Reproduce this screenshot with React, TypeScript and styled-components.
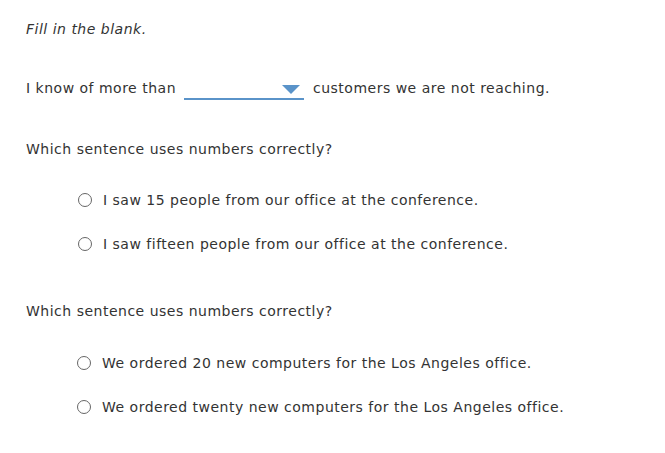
import * as React from "react"
import styled, { createGlobalStyle } from "styled-components"

const GlobalStyle = createGlobalStyle`
  html, body {
    margin: 0;
    padding: 0;
    background: #ffffff;
  }
  body {
    font-family: "DejaVu Sans", Verdana, sans-serif;
    font-size: 14px;
    letter-spacing: 0.5px;
    color: #333333;
  }
`

const questions = [
  {
    prompt: "Which sentence uses numbers correctly?",
    indent: 78,
    options: [
      "I saw 15 people from our office at the conference.",
      "I saw fifteen people from our office at the conference.",
    ],
  },
  {
    prompt: "Which sentence uses numbers correctly?",
    indent: 77,
    options: [
      "We ordered 20 new computers for the Los Angeles office.",
      "We ordered twenty new computers for the Los Angeles office.",
    ],
  },
]

const App = () => (
  <Page>
    <GlobalStyle />
    <Instruction>Fill in the blank.</Instruction>
    <BlankLine>
      <span>I know of more than</span>
      <Dropdown>
        <Caret viewBox="0 0 18 10" width="18" height="10">
          <path d="M0 0 H18 L9 9 Z" fill="#5a93c9" />
        </Caret>
      </Dropdown>
      <span>customers we are not reaching.</span>
    </BlankLine>
    {questions.map((q, i) => (
      <Question key={i} $first={i === 0}>
        <Prompt>{q.prompt}</Prompt>
        <Options $indent={q.indent} $gap={i === 0 ? 33 : 34}>
          {q.options.map((opt) => (
            <Option key={opt}>
              <Radio />
              <span>{opt}</span>
            </Option>
          ))}
        </Options>
      </Question>
    ))}
  </Page>
)

export default App

const Page = styled.div`
  padding: 20px 0 0 26px;
`

const Instruction = styled.p`
  margin: 0;
  font-style: italic;
  line-height: 18px;
`

const BlankLine = styled.div`
  display: flex;
  align-items: center;
  margin-top: 40px;
  line-height: 18px;
`

const Dropdown = styled.div`
  position: relative;
  width: 120px;
  height: 18px;
  margin: 0 9px 0 8px;
  border-bottom: 2px solid #5a93c9;
  top: 2px;
`

const Caret = styled.svg`
  position: absolute;
  right: 4px;
  top: 5px;
`

const Question = styled.div<{ $first: boolean }>`
  margin-top: ${(p) => (p.$first ? 42 : 49)}px;
`

const Prompt = styled.p`
  margin: 0;
  line-height: 18px;
`

const Options = styled.div<{ $indent: number; $gap: number }>`
  display: flex;
  flex-direction: column;
  gap: 26px;
  margin-top: ${(p) => p.$gap}px;
  padding-left: ${(p) => p.$indent - 26}px;
`

const Option = styled.label`
  display: flex;
  align-items: center;
  gap: 11px;
  line-height: 18px;
`

const Radio = styled.span`
  display: inline-block;
  width: 12px;
  height: 12px;
  border: 1px solid #666666;
  border-radius: 50%;
  flex: none;
`
